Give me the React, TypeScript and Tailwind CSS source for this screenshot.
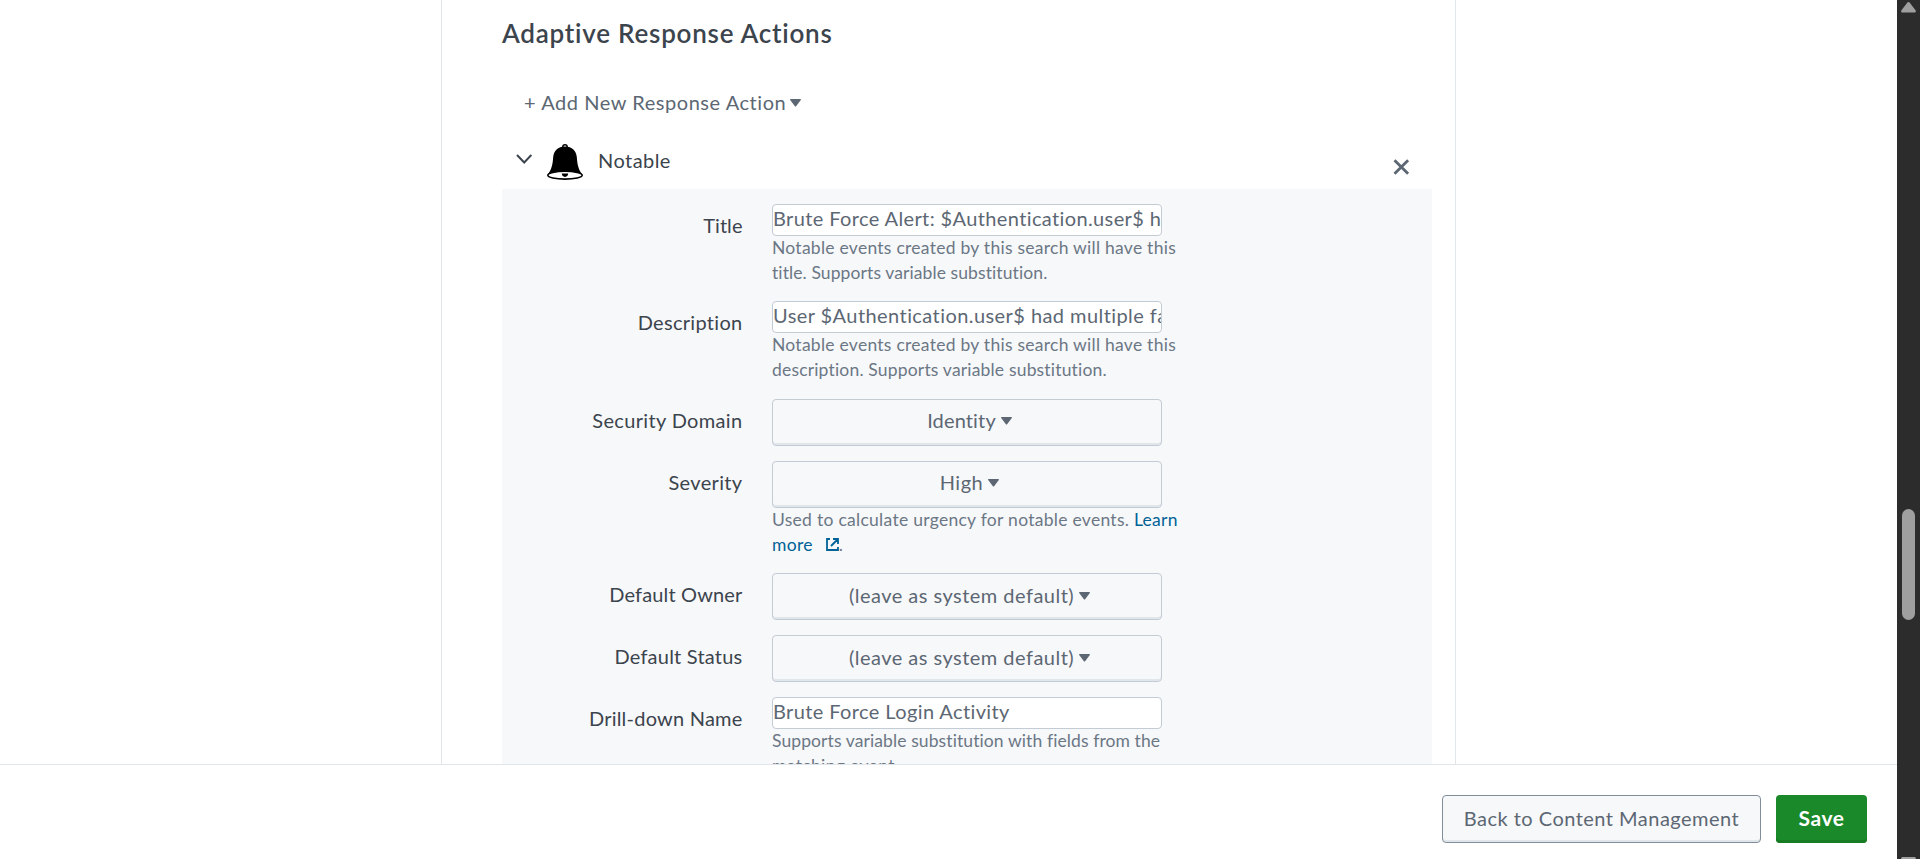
import type { ReactNode } from "react";

function Caret() {
  return (
    <svg width="11" height="9" viewBox="0 0 11 9" className="shrink-0 fill-[#5c6773]">
      <path d="M.6 1h9.800c.5 0 .7.5.4.9L6.100 8.200c-.3.4-.9.4-1.200 0L.2 1.900C-.1 1.500.1 1 .6 1Z" />
    </svg>
  );
}

function Bell() {
  return (
    <svg width="36" height="36" viewBox="0 0 36 36" className="shrink-0">
      <circle cx="18" cy="3" r="2.2" fill="none" stroke="#000" strokeWidth="1.5" />
      <path d="M18 2.600c-7.200 0-11.200 4.200-11.800 10.400C5.700 20 4.800 25 .8 30.500h34.400c-4-5.500-4.900-10.500-5.400-17.500C29.200 6.800 25.200 2.600 18 2.600Z" />
      <ellipse cx="18" cy="31.200" rx="17.200" ry="3.900" fill="#fff" stroke="#000" strokeWidth="1.600" />
      <path d="M14.800 29.600h6.400c0 2-1.400 3.300-3.200 3.300s-3.200-1.300-3.200-3.300Z" />
    </svg>
  );
}

function Row({ label, tracking, height, children }: { label: string; tracking: string; height: string; children: ReactNode }) {
  return (
    <div className={`flex ${height}`}>
      <div className={`w-[240.5px] shrink-0 pt-[7px] text-right text-xl leading-7 whitespace-nowrap text-[#3c444d] ${tracking}`}>{label}</div>
      <div className="ml-[29.5px] w-[410px]">{children}</div>
    </div>
  );
}

function TextBox({ children, tracking }: { children: ReactNode; tracking: string }) {
  return (
    <div className={`h-8 w-[390px] overflow-hidden rounded-[4px] border border-[#c3cbd4] bg-white text-xl leading-[27px] whitespace-nowrap text-[#5c6773] ${tracking}`}>
      {children}
    </div>
  );
}

function SelectBox({ children, nudge }: { children: ReactNode; nudge: string }) {
  return (
    <button className={`flex h-[47px] w-[390px] items-center justify-center gap-[5px] rounded-[4px] border border-[#c3cbd4] bg-[#f7f8fa] pl-[5px] text-xl text-[#5c6773] shadow-[inset_0_-2px_0_#e1e6eb] ${nudge}`}>
      {children}
      <Caret />
    </button>
  );
}

function Help({ children }: { children: ReactNode }) {
  return <div className="-mt-px text-[17.5px] leading-[25.200px] whitespace-nowrap text-[#6b7785]">{children}</div>;
}

export default function App() {
  return (
    <div className="flex h-[859px] w-full overflow-hidden bg-white font-['Lato',sans-serif]">
      <div className="flex min-w-0 flex-1 flex-col">
        <main className="h-[764px] overflow-hidden pl-[441px]">
          <div className="h-full w-[1015px] border-x border-[#e1e6eb] pl-[60px]">
            <h2 className="h-[84px] pt-4 text-[26px] leading-[34px] font-semibold tracking-[0.760px] text-[#3c444d]">
              <span>Adaptive Response Actions</span>
            </h2>
            <button className="ml-[22px] flex h-9 items-center gap-1 text-xl tracking-[0.550px] text-[#5c6773]">
              <span>+ Add New Response Action</span>
              <Caret />
            </button>
            <div className="flex h-[69px] w-[930px] pl-3.5">
              <svg width="16" height="10" viewBox="0 0 16 10" className="mt-[34px] shrink-0 fill-none stroke-[#3c444d] stroke-2">
                <path d="m1 1 7.200 7.500L15.400 1" />
              </svg>
              <div className="mt-6 ml-[15px]">
                <Bell />
              </div>
              <span className="mt-[26px] ml-[15px] text-xl leading-7 tracking-[0.450px] text-[#3c444d]">Notable</span>
              <svg width="17" height="16" viewBox="0 0 17 16" className="mt-[39px] mr-[22px] ml-auto shrink-0 fill-none stroke-[#5c6773] stroke-[2.800]">
                <path d="m1.500 1.200 13.600 13.600M15.100 1.200 1.500 14.800" />
              </svg>
            </div>
            <section className="h-[700px] w-[930px] bg-[#f7f8fa] pt-[15px]">
              <Row label="Title" tracking="tracking-[0.050px]" height="h-[97px]">
                <TextBox tracking="tracking-[0.380px]">Brute Force Alert: $Authentication.user$ h</TextBox>
                <Help>
                  <span className="tracking-[0.260px]">Notable events created by this search will have this</span><br />
                  <span className="tracking-[0.100px]">title. Supports variable substitution.</span>
                </Help>
              </Row>
              <Row label="Description" tracking="tracking-[0.300px]" height="h-[98px]">
                <TextBox tracking="tracking-[0.430px]">User $Authentication.user$ had multiple fa</TextBox>
                <Help>
                  <span className="tracking-[0.260px]">Notable events created by this search will have this</span><br />
                  <span className="tracking-[0.180px]">description. Supports variable substitution.</span>
                </Help>
              </Row>
              <Row label="Security Domain" tracking="tracking-[0.350px]" height="h-[62px]">
                <SelectBox nudge="pb-[5px]"><span className="tracking-[0.150px]">Identity</span></SelectBox>
              </Row>
              <Row label="Severity" tracking="tracking-[0.350px]" height="h-[112px]">
                <SelectBox nudge="pb-[5px]"><span className="tracking-[0.500px]">High</span></SelectBox>
                <Help>
                  <span className="tracking-[0.280px]">Used to calculate urgency for notable events. </span>
                  <a className="tracking-[0.300px] text-[#006297]">Learn<br />more</a>
                  <svg width="13" height="13" viewBox="0 0 13 13" className="ml-[13px] inline-block align-baseline fill-none stroke-[#006297] stroke-[1.800]">
                    <path d="M4 1H1v11h11V9M7 1h5v5M12 1 5 8" />
                  </svg>.
                </Help>
              </Row>
              <Row label="Default Owner" tracking="tracking-[0.150px]" height="h-[62px]">
                <SelectBox nudge="pb-[3px]"><span className="tracking-[0.480px]">(leave as system default)</span></SelectBox>
              </Row>
              <Row label="Default Status" tracking="tracking-[0.220px]" height="h-[62px]">
                <SelectBox nudge="pb-[3px]"><span className="tracking-[0.480px]">(leave as system default)</span></SelectBox>
              </Row>
              <Row label="Drill-down Name" tracking="tracking-[0.220px]" height="h-[98px]">
                <TextBox tracking="tracking-[0.390px]">Brute Force Login Activity</TextBox>
                <Help>
                  <span className="tracking-[0.100px]">Supports variable substitution with fields from the</span><br />
                  <span className="tracking-[0.350px]">matching event.</span>
                </Help>
              </Row>
            </section>
          </div>
        </main>
        <footer className="flex h-[95px] items-start justify-end gap-[15px] border-t border-[#e1e6eb] pt-[30px] pr-[30px] text-xl">
          <button className="h-12 w-[319px] rounded-[4px] border border-[#818d99] bg-[#f7f8fa] pb-[3px] tracking-[0.480px] text-[#5c6773] shadow-[inset_0_-2px_0_#e1e6eb]">
            <span>Back to Content Management</span>
          </button>
          <button className="h-12 w-[91px] rounded-[4px] bg-[#1a8929] pb-[3px] text-[21px] font-bold tracking-[0.600px] text-white shadow-[inset_0_-3px_0_#187c25]">
            <span>Save</span>
          </button>
        </footer>
      </div>
      <div className="flex w-[23px] flex-col items-center bg-[#2c2c2c]">
        <svg width="15" height="11" viewBox="0 0 15 11" className="mt-0.5 shrink-0 fill-[#9f9f9f]">
          <path d="M6.200.7c.7-.9 1.900-.9 2.600 0L14.500 8.200c.8 1.100.2 2.400-1.100 2.400H1.600C.3 10.600-.3 9.300.5 8.200L6.200.7Z" />
        </svg>
        <div className="mt-[496px] h-[111px] w-[13px] shrink-0 rounded-full bg-[#9f9f9f]" />
        <svg width="15" height="11" viewBox="0 0 15 11" className="mt-[237px] shrink-0 fill-[#9f9f9f]">
          <path d="M6.200 9.900c.7.900 1.900.9 2.600 0l5.700-7.500C15.300 1.300 14.700 0 13.400 0H1.600C.3 0-.3 1.300.5 2.400l5.700 7.500Z" />
        </svg>
      </div>
    </div>
  );
}
